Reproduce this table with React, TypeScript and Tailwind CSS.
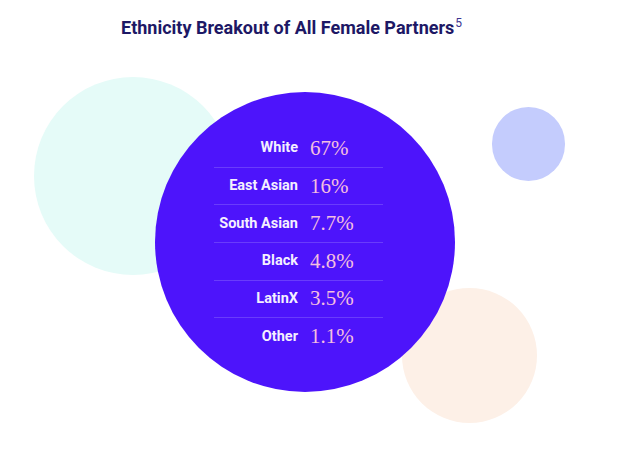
const rows = [
  { label: "White", value: "67%" },
  { label: "East Asian", value: "16%" },
  { label: "South Asian", value: "7.7%" },
  { label: "Black", value: "4.8%" },
  { label: "LatinX", value: "3.5%" },
  { label: "Other", value: "1.1%" },
]

export default function App() {
  return (
    <div className="relative w-[617px] h-[467px] overflow-hidden bg-white font-['Roboto','Liberation_Sans',sans-serif]">
      {/* Heading */}
      <h2 className="pt-[16px] pl-[121px] text-[18px] leading-[24px] font-bold text-[#1d1865]">
        Ethnicity Breakout of All Female Partners
        <sup className="ml-px text-[12px] font-normal text-[#3d3490] top-[-0.6em]">5</sup>
      </h2>

      {/* Decorative bubbles */}
      <div className="absolute left-[34px] top-[77px] w-[198px] h-[198px] rounded-full bg-[#e5fbf8]" />
      <div className="absolute left-[492px] top-[107px] w-[73px] h-[74px] rounded-full bg-[#c4ccfd]" />
      <div className="absolute left-[402px] top-[288px] w-[135px] h-[135px] rounded-full bg-[#fdf0e7]" />

      {/* Main circle */}
      <div className="absolute left-[155px] top-[92px] w-[300px] h-[300px] rounded-full bg-[#4d14fb] flex items-center justify-center">
        <div className="w-[169px] -ml-[13px]">
          {rows.map((row, i) => (
            <div
              key={row.label}
              className={`flex items-center h-[37.6px] ${i > 0 ? "border-t border-[#6a3cfb]" : ""}`}
            >
              <span className="w-[84px] text-right text-[14.5px] font-bold text-[#f4efff]">{row.label}</span>
              <span className="ml-[12px] text-[21px] leading-none text-[#f4bfe0] font-['Liberation_Serif',serif]">
                {row.value}
              </span>
            </div>
          ))}
        </div>
      </div>
    </div>
  )
}
